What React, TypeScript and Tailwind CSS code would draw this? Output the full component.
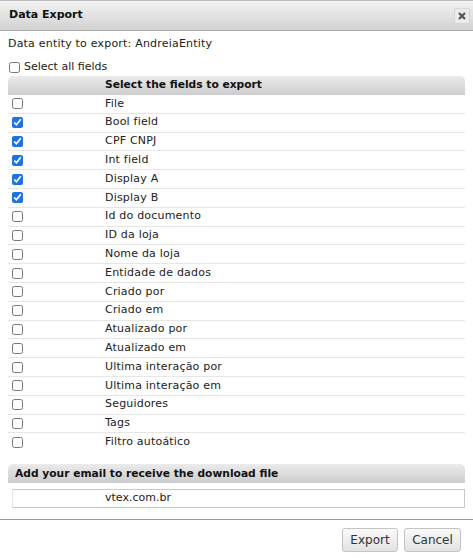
import React from "react";

const fields: { label: string; checked: boolean }[] = [
  { label: "File", checked: false },
  { label: "Bool field", checked: true },
  { label: "CPF CNPJ", checked: true },
  { label: "Int field", checked: true },
  { label: "Display A", checked: true },
  { label: "Display B", checked: true },
  { label: "Id do documento", checked: false },
  { label: "ID da loja", checked: false },
  { label: "Nome da loja", checked: false },
  { label: "Entidade de dados", checked: false },
  { label: "Criado por", checked: false },
  { label: "Criado em", checked: false },
  { label: "Atualizado por", checked: false },
  { label: "Atualizado em", checked: false },
  { label: "Ultima interação por", checked: false },
  { label: "Ultima interação em", checked: false },
  { label: "Seguidores", checked: false },
  { label: "Tags", checked: false },
  { label: "Filtro autoático", checked: false },
];

function App() {
  return (
    <div className="w-[473px] h-[558px] bg-white font-['DejaVu_Sans',Verdana,sans-serif] text-[11px] text-[#222] overflow-hidden">
      {/* title bar */}
      <div className="h-[31px] flex items-center justify-between pl-[9px] pr-[3px] border-t border-[#bdbdbd] border-b border-b-[#a9a9a9] bg-gradient-to-b from-[#f3f3f3] to-[#d2d2d2]">
        <span className="font-bold text-[11px] text-[#111]">Data Export</span>
        <button className="w-[16px] h-[16px] flex items-center justify-center rounded-[2px] bg-[#ececec] border border-[#d6d6d6]">
          <svg width="8" height="8" viewBox="0 0 8 8">
            <path d="M1 1L7 7M7 1L1 7" stroke="#555" strokeWidth="2.2" />
          </svg>
        </button>
      </div>

      <div className="px-[8px]">
        <p className="mt-[4px] leading-[18px] tracking-[0.2px]">Data entity to export: AndreiaEntity</p>

        <label className="mt-[7px] flex items-center gap-[4px] leading-[14px]">
          <input type="checkbox" className="w-[11px] h-[11px] m-0 ml-[1px]" />
          Select all fields
        </label>

        {/* fields table */}
        <div className="mt-[2px]">
          <div className="h-[19px] grid grid-cols-[97px_1fr] items-center rounded-t-[5px] bg-gradient-to-b from-[#ebebeb] to-[#cdcdcd] font-bold text-[10.7px] text-[#111]">
            <span />
            <span>Select the fields to export</span>
          </div>
          {fields.map((f) => (
            <div
              key={f.label}
              className="h-[18.8px] grid grid-cols-[97px_1fr] items-center border-b border-[#e6e6e6] last:border-b-0 tracking-[0.2px]"
            >
              <span className="pl-[4px] flex items-center">
                <input
                  type="checkbox"
                  defaultChecked={f.checked}
                  className="w-[11px] h-[11px] m-0 accent-[#1a73e8]"
                />
              </span>
              <span>{f.label}</span>
            </div>
          ))}
        </div>

        {/* email */}
        <div className="mt-[12px] h-[19px] flex items-center pl-[7px] rounded-t-[5px] bg-gradient-to-b from-[#ebebeb] to-[#cdcdcd] font-bold text-[10.7px] text-[#111]">
          Add your email to receive the download file
        </div>
        <div className="mt-[6px] ml-[4px] h-[19px] flex items-center border border-[#c8c8c8] border-l-[#e4e4e4]">
          <span className="w-[92px] h-full bg-white" />
          <span>vtex.com.br</span>
        </div>
      </div>

      {/* footer */}
      <div className="mt-[11px] border-t border-[#9a9a9a] flex justify-end gap-[6px] pt-[8px] pr-[12px]">
        <button className="w-[56px] h-[24px] rounded-[3px] border border-[#c4c4c4] bg-gradient-to-b from-[#fafafa] to-[#e2e2e2] text-[12px] text-[#333]">
          Export
        </button>
        <button className="w-[57px] h-[24px] rounded-[3px] border border-[#c4c4c4] bg-gradient-to-b from-[#fafafa] to-[#e2e2e2] text-[12px] text-[#333]">
          Cancel
        </button>
      </div>
    </div>
  );
}

export default App;
